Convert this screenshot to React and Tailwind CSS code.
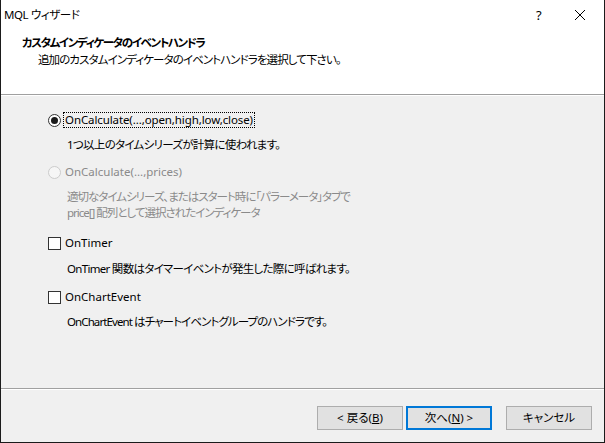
import React from 'react';

const FONT = "font-['Segoe_UI','Noto_Sans','Noto_Sans_CJK_JP',sans-serif] [font-feature-settings:'palt']";

function Radio({ checked, disabled }) {
  return (
    <span
      className={`w-[13px] h-[13px] rounded-full border flex items-center justify-center shrink-0 ${disabled ? 'border-[#cccccc] bg-[#f6f6f6]' : 'border-[#333333] bg-white'}`}
    >
      {checked && <span className="w-[7px] h-[7px] rounded-full bg-[#1a1a1a]" />}
    </span>
  );
}

function Check() {
  return <span className="w-[13px] h-[13px] border border-[#333333] bg-white shrink-0" />;
}

function Button({ children, primary }) {
  return (
    <button
      className={`w-[86px] h-[24px] bg-[#e1e1e1] text-[11.5px] text-black flex items-center justify-center ${primary ? 'border-2 border-[#0078d7]' : 'border border-[#adadad]'}`}
    >
      {children}
    </button>
  );
}

export default function App() {
  return (
    <div className={`w-[605px] h-[443px] flex flex-col bg-[#f0f0f0] border-l border-r border-b border-[#1b1b1b] text-black text-[11.5px] leading-[16px] ${FONT}`}>
      <div className="bg-white">
        <div className="h-[30px] flex items-center pl-[3px]">
          <span className="flex-1 tracking-[-0.4px]">MQL ウィザード</span>
          <span className="w-[14px] text-[13px] mr-[24px]">?</span>
          <svg width="12" height="12" viewBox="0 0 12 12" className="mr-[18px]">
            <path d="M1 1 L11 11 M11 1 L1 11" stroke="#000" strokeWidth="1" />
          </svg>
        </div>
        <div className="h-[64px] pl-[21px] pt-[5px]">
          <div className="font-bold tracking-[-1.4px]">カスタムインディケータのイベントハンドラ</div>
          <div className="pl-[16px] mt-[1px] tracking-[-0.9px]">追加のカスタムインディケータのイベントハンドラを選択して下さい。</div>
        </div>
      </div>
      <div className="border-t border-[#a0a0a0] border-b border-b-white" />

      <div className="flex-1 pl-[47px] pt-[16px]">
        <div className="flex items-center h-[16px]">
          <Radio checked />
          <span className="ml-[2px] px-[1px] border border-dotted border-black leading-[14px] tracking-[-0.1px]">OnCalculate(...,open,high,low,close)</span>
        </div>
        <div className="ml-[19px] mt-[9px] tracking-[-0.7px]">1つ以上のタイムシリーズが計算に使われます。</div>

        <div className="flex items-center h-[16px] mt-[11px] text-[#8a8a8a]">
          <Radio disabled />
          <span className="ml-[4px]">OnCalculate(...,prices)</span>
        </div>
        <div className="ml-[19px] mt-[9px] text-[#8a8a8a] tracking-[-1px]">
          <div>適切なタイムシリーズ、またはスタート時に「パラーメータ」タブで</div>
          <div>price[] 配列として選択されたインディケータ</div>
        </div>

        <div className="flex items-center h-[16px] mt-[14px]">
          <Check />
          <span className="ml-[4px]">OnTimer</span>
        </div>
        <div className="ml-[19px] mt-[10px] tracking-[-0.7px]">OnTimer 関数はタイマーイベントが発生した際に呼ばれます。</div>

        <div className="flex items-center h-[16px] mt-[12px]">
          <Check />
          <span className="ml-[4px]">OnChartEvent</span>
        </div>
        <div className="ml-[19px] mt-[9px] tracking-[-0.9px]">OnChartEvent はチャートイベントグループのハンドラです。</div>
      </div>

      <div className="border-t border-[#a0a0a0] border-b border-b-white" />
      <div className="h-[52px] flex items-start justify-end pt-[16px] pr-[12px]">
        <Button>&lt; 戻る(<span className="underline">B</span>)</Button>
        <div className="ml-[3px]">
          <Button primary>次へ(<span className="underline">N</span>) &gt;</Button>
        </div>
        <div className="ml-[14px]">
          <Button>キャンセル</Button>
        </div>
      </div>
    </div>
  );
}
